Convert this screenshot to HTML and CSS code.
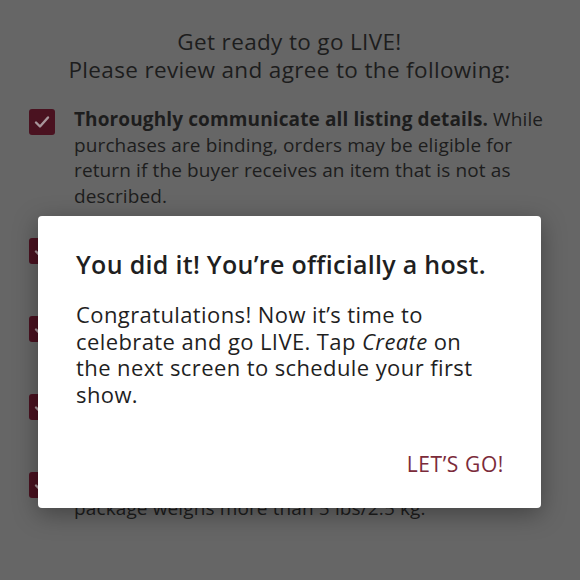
FILE: index.html
```html
<!DOCTYPE html>
<html lang="en">
<head>
    <meta charset="utf-8">
    <title>Go LIVE</title>
    <link rel="stylesheet" href="styles.css">
</head>
<body>

    <div class="page">
        <h1 class="heading">
            Get ready to go LIVE!<br>
            Please review and agree to the following:
        </h1>

        <ul class="rules">
            <li class="rule">
                <span class="check"><svg viewBox="0 0 26 26" width="26" height="26"><path d="M7 13.5l4 4 8-9" fill="none" stroke="#a8969b" stroke-width="2.4" stroke-linecap="round" stroke-linejoin="round"/></svg></span>
                <p><strong>Thoroughly communicate all listing details.</strong> While purchases are binding, orders may be eligible for return if the buyer receives an item that is not as described.</p>
            </li>
            <li class="rule">
                <span class="check"><svg viewBox="0 0 26 26" width="26" height="26"><path d="M7 13.5l4 4 8-9" fill="none" stroke="#a8969b" stroke-width="2.4" stroke-linecap="round" stroke-linejoin="round"/></svg></span>
                <p><strong>Ship within 7 days.</strong> Buyers expect their orders to arrive quickly after a show.</p>
            </li>
            <li class="rule">
                <span class="check"><svg viewBox="0 0 26 26" width="26" height="26"><path d="M7 13.5l4 4 8-9" fill="none" stroke="#a8969b" stroke-width="2.4" stroke-linecap="round" stroke-linejoin="round"/></svg></span>
                <p><strong>Be kind and respectful.</strong> Keep your show friendly and follow our guidelines.</p>
            </li>
            <li class="rule">
                <span class="check"><svg viewBox="0 0 26 26" width="26" height="26"><path d="M7 13.5l4 4 8-9" fill="none" stroke="#a8969b" stroke-width="2.4" stroke-linecap="round" stroke-linejoin="round"/></svg></span>
                <p><strong>Only sell what you own.</strong> All items must be authentic and available.</p>
            </li>
            <li class="rule">
                <span class="check"><svg viewBox="0 0 26 26" width="26" height="26"><path d="M7 13.5l4 4 8-9" fill="none" stroke="#a8969b" stroke-width="2.4" stroke-linecap="round" stroke-linejoin="round"/></svg></span>
                <p><strong>Upgrade your label.</strong> Do this if the <span class="nowrap">package weighs more than 5 lbs/2.5 kg.</span></p>
            </li>
        </ul>
    </div>

    <div class="dialog">
        <h2 class="dialog-title">You did it! You’re officially a host.</h2>
        <p class="dialog-text">Congratulations! Now it’s time to celebrate and go LIVE. Tap <em>Create</em> on the next screen to schedule your first show.</p>
        <div class="dialog-actions">
            <a class="dialog-btn" href="#">LET’S GO!</a>
        </div>
    </div>

</body>
</html>
```

FILE: styles.css
```css
html {
    height: 100%;
}
body {
    margin: 0;
    padding: 0;
    height: 100%;
    background: #666666;
    color: #1d1d1d;
    font-family: "Open Sans", "Noto Sans", sans-serif;
    overflow: hidden;
}
.page {
    padding: 28px 30px 0 29px;
}
.heading {
    margin: 0;
    font-size: 22.5px;
    line-height: 28px;
    font-weight: 500;
    letter-spacing: 0.35px;
    text-align: center;
}
.rules {
    list-style: none;
    margin: 23px 0 0;
    padding: 0;
    display: flex;
    flex-direction: column;
    gap: 27px;
}
.rule {
    display: flex;
    gap: 19px;
    align-items: flex-start;
}
.rule p {
    margin: 0;
    font-size: 19px;
    line-height: 25.5px;
    font-weight: 400;
    letter-spacing: 0.12px;
}
.rule strong {
    font-weight: 700;
}
.nowrap {
    white-space: nowrap;
}
.check {
    flex: none;
    width: 26px;
    height: 26px;
    margin-top: 2px;
    border-radius: 3px;
    background: #4a1220;
}
.check svg {
    display: block;
}
.dialog {
    position: absolute;
    left: 38px;
    top: 216px;
    width: 503px;
    height: 292px;
    box-sizing: border-box;
    padding: 33px 37px 31px 38px;
    background: #ffffff;
    border-radius: 4px;
    box-shadow: 0 6px 24px rgba(0, 0, 0, 0.35);
    display: flex;
    flex-direction: column;
    color: #1f1f1f;
}
.dialog-title {
    margin: 0;
    font-size: 25px;
    line-height: 30px;
    font-weight: 600;
    letter-spacing: 0.3px;
}
.dialog-text {
    margin: 22px 16px 0 0;
    font-size: 22px;
    line-height: 26.5px;
    font-weight: 400;
    letter-spacing: 0.4px;
}
.dialog-actions {
    margin-top: auto;
    display: flex;
    justify-content: flex-end;
}
.dialog-btn {
    color: #7b2b3a;
    font-size: 21px;
    line-height: 26px;
    text-decoration: none;
    font-weight: 400;
    letter-spacing: 0.6px;
}
```
